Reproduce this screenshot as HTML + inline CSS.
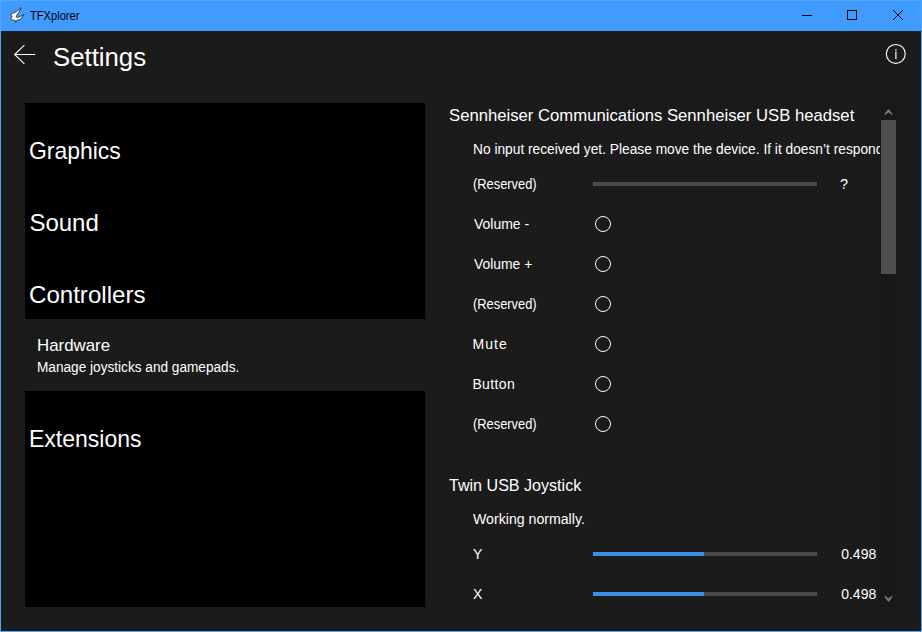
<!DOCTYPE html>
<html><head><meta charset="utf-8">
<style>
*{margin:0;padding:0;box-sizing:border-box}
html,body{width:922px;height:632px;overflow:hidden}
body{position:relative;background:#1b1b1b;font-family:"Liberation Sans",sans-serif;color:#fff}
.a{position:absolute;white-space:nowrap;line-height:1;transform-origin:0 0}
.b{position:absolute}
.panel{position:absolute;left:25px;width:400px;height:216px;background:#000}
.track{position:absolute;left:593px;width:224px;height:4px;background:#4a4a4a}
.fill{position:absolute;left:593px;width:111px;height:4px;background:#3b90e8}
.radio{position:absolute;left:594.5px;width:16px;height:16px;border:1px solid #fff;border-radius:50%}
</style></head><body>
<!-- window frame + title bar -->
<div class="b" style="left:0;top:0;width:922px;height:31px;background:#409bff"></div>
<div class="b" style="left:0;top:0;width:922px;height:1px;background:#56a5f5"></div>
<div class="b" style="left:0;top:0;width:1px;height:632px;background:#56a5f5"></div>
<div class="b" style="left:921px;top:0;width:1px;height:632px;background:#56a5f5"></div>
<div class="b" style="left:0;top:631px;width:922px;height:1px;background:#56a5f5"></div>
<svg class="b" style="left:8px;top:5px" width="18" height="18" viewBox="0 0 18 18">
  <path d="M13.1 2.6 L8.5 6.6 L4 8.6 L2.6 9.5 L4.3 12 L2.6 13.7 L4.5 15 L7.1 15.4 L7.7 17.4 L8.5 15.4 L12.3 14.6 L16 9.4 L12.5 11.4 L9.4 12.5 L8 11.5 L10.5 8 Z" fill="#fff" stroke="#1a1a1a" stroke-width="0.8" stroke-linejoin="round"/>
</svg>
<svg class="b" style="left:795px;top:0" width="127" height="31">
  <line x1="7" y1="15.5" x2="17" y2="15.5" stroke="#000" stroke-width="1"/>
  <rect x="52.5" y="10.5" width="9" height="9" fill="none" stroke="#000" stroke-width="1"/>
  <line x1="98" y1="10" x2="108" y2="20" stroke="#000" stroke-width="1"/>
  <line x1="108" y1="10" x2="98" y2="20" stroke="#000" stroke-width="1"/>
</svg>
<!-- header -->
<svg class="b" style="left:12px;top:43px" width="26" height="24">
  <path d="M2.6 11.5 H23.3 M12.4 2.2 L2.6 11.5 L12.4 20.8" fill="none" stroke="#fff" stroke-width="1.05"/>
</svg>
<svg class="b" style="left:884px;top:42px" width="24" height="24">
  <circle cx="11.8" cy="11.9" r="9.45" fill="none" stroke="#fff" stroke-width="1.1"/>
  <rect x="11.3" y="7" width="1.2" height="1.5" fill="#fff"/>
  <rect x="11.3" y="9.4" width="1.2" height="7.6" fill="#fff"/>
</svg>
<!-- left panels -->
<div class="panel" style="top:103px"></div>
<div class="panel" style="top:391px"></div>
<!-- sliders / radios -->
<div class="track" style="top:182px"></div>
<div class="radio" style="top:216px"></div>
<div class="radio" style="top:256px"></div>
<div class="radio" style="top:296px"></div>
<div class="radio" style="top:336px"></div>
<div class="radio" style="top:376px"></div>
<div class="radio" style="top:416px"></div>
<div class="track" style="top:552px"></div>
<div class="fill" style="top:552px"></div>
<div class="track" style="top:592px"></div>
<div class="fill" style="top:592px"></div>
<!-- scrollbar -->
<div class="b" style="left:880px;top:103px;width:16px;height:504px;background:#181818"></div>
<div class="b" style="left:881px;top:120px;width:15px;height:154px;background:#4f4f4f"></div>
<svg class="b" style="left:880px;top:103px" width="16" height="504">
  <path d="M4.8 10.4 L8.5 5.9 L12.2 10.4 L12.2 12.2 L8.5 9.3 L4.8 12.2 Z" fill="#7a7a7a"/>
  <path d="M4.8 494.4 L8.5 498.9 L12.2 494.4 L12.2 492.6 L8.5 495.5 L4.8 492.6 Z" fill="#7a7a7a"/>
</svg>
<!-- texts -->
<div class="a m" style="left:30.19px;top:9.0px;font-size:13px;color:#000;transform:scaleX(0.8552)">TFXplorer</div>
<div class="a m" style="left:52.81px;top:43.99px;font-size:26px;transform:scaleX(0.9902)">Settings</div>
<div class="a m" style="left:29.46px;top:139.38px;font-size:24px;transform:scaleX(0.9553)">Graphics</div>
<div class="a m" style="left:29.4px;top:211.38px;font-size:24px">Sound</div>
<div class="a m" style="left:29.4px;top:283.38px;font-size:24px;transform:scaleX(1.0035)">Controllers</div>
<div class="a m" style="left:36.61px;top:336.71px;font-size:17px;transform:scaleX(0.9917)">Hardware</div>
<div class="a m" style="left:37.21px;top:360.15px;font-size:14px;transform:scaleX(0.9733)">Manage joysticks and gamepads.</div>
<div class="a m" style="left:29.08px;top:427.18px;font-size:24px;transform:scaleX(0.9591)">Extensions</div>
<div class="a m" style="left:449.01px;top:106.91px;font-size:17px;transform:scaleX(0.9814)">Sennheiser Communications Sennheiser USB headset</div>
<div class="b" style="left:440px;top:130px;width:440px;height:40px;overflow:hidden"><div class="a m" style="left:33.21px;top:11.55px;font-size:14px;transform:scaleX(0.982)">No input received yet. Please move the device. If it doesn’t respond to input, try restarting the device.</div></div>
<div class="a m" style="left:472.66px;top:176.95px;font-size:14px;transform:scaleX(0.9191)">(Reserved)</div>
<div class="a m" style="left:839.97px;top:177.15px;font-size:14px;transform:scaleX(1.0333)">?</div>
<div class="a m" style="left:473.6px;top:216.95px;font-size:14px;transform:scaleX(0.9982)">Volume -</div>
<div class="a m" style="left:473.6px;top:256.85px;font-size:14px;transform:scaleX(0.9915)">Volume +</div>
<div class="a m" style="left:472.66px;top:296.95px;font-size:14px;transform:scaleX(0.9191)">(Reserved)</div>
<div class="a m" style="left:472.4px;top:337.05px;font-size:14px;letter-spacing:1.1px">Mute</div>
<div class="a m" style="left:472.4px;top:376.95px;font-size:14px;letter-spacing:0.36px">Button</div>
<div class="a m" style="left:472.66px;top:416.95px;font-size:14px;transform:scaleX(0.9191)">(Reserved)</div>
<div class="a m" style="left:448.81px;top:476.91px;font-size:17px;transform:scaleX(0.9457)">Twin USB Joystick</div>
<div class="a m" style="left:472.79px;top:512.45px;font-size:14px;transform:scaleX(1.0101)">Working normally.</div>
<div class="a m" style="left:473.0px;top:547.15px;font-size:14px">Y</div>
<div class="a m" style="left:841.2px;top:547.15px;font-size:14px">0.498</div>
<div class="a m" style="left:473.0px;top:587.15px;font-size:14px">X</div>
<div class="a m" style="left:841.2px;top:587.15px;font-size:14px">0.498</div>
</body></html>
